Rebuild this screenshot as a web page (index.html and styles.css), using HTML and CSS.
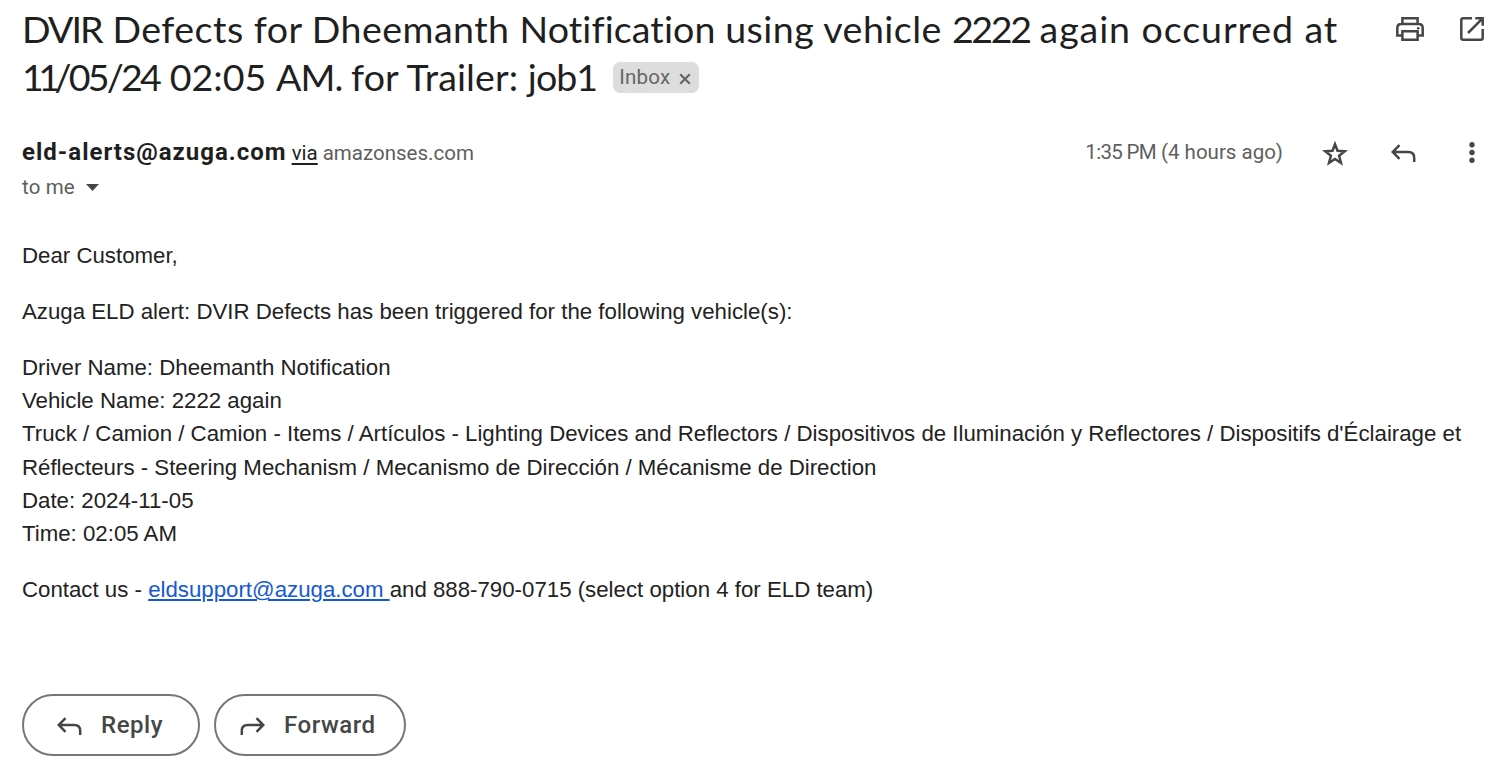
FILE: index.html
```html
<!DOCTYPE html>
<html lang="en">
<head>
<meta charset="utf-8">
<title>DVIR Defects</title>
<link rel="stylesheet" href="styles.css">
</head>
<body>
<main class="message">
  <header class="subject-bar">
    <h1 class="subject"><span class="caps">DVIR </span><span class="regular">Defects for Dheemanth </span><span class="snug">Notification </span><span class="regular">using vehicle </span><span class="digits">2222 </span><span class="loose">again occurred at</span><br><span class="ones">11</span><span class="digits date">/05/24 </span><span>02:05 </span><span class="initials">AM. </span><span class="snug">for Trailer: </span><span class="initials">job1</span><span class="label"><span class="label-name">Inbox</span><svg class="label-close" viewBox="0 0 12 12"><path d="M1.2 1.2l9.6 9.6M10.8 1.2l-9.6 9.6"/></svg></span></h1>
    <div class="subject-actions">
      <svg class="icon print" viewBox="0 0 28 24"><path d="M6.4 7V1.2h15.2V7M6.2 18.500H1.300V11q0-4 4-4h17.400q4 0 4 4v7.500h-4.900M6.400 14.200h15.200v8.600H6.400z"/><circle class="dot" cx="22.200" cy="11.300" r="1.300"/></svg>
      <svg class="icon open" viewBox="0 0 24 24"><path d="M12 1.300H3.300q-2 0-2 2v17.400q0 2 2 2h17.400q2 0 2-2V12M15.300 1.300h7.400v7.400M22.300 1.700L8 16"/></svg>
    </div>
  </header>
  <section class="sender-bar">
    <div class="sender">
      <div class="from"><span class="address">eld-alerts@azuga.com</span><span class="via">via</span><span class="domain">amazonses.com</span></div>
      <div class="to"><span>to me</span><svg class="caret" viewBox="0 0 13 7"><path d="M0 0h13L6.500 7z"/></svg></div>
    </div>
    <div class="meta">
      <span class="time"><span class="clock">1:35 PM</span> (4 hours ago)</span>
      <svg class="icon star" viewBox="0 0 26 25"><path d="M13 3.200l2.500 6.600 7.200.5-5.600 4.400 1.900 7.300-6-4-6 4 1.900-7.300L3.300 10.300l7.200-.5z"/></svg>
      <svg class="icon arrow" viewBox="0 0 25 18"><path d="M8.500 1.200L1.700 8l6.800 6.800M1.700 8h15.600q5.900 0 5.900 5.900v4"/></svg>
      <svg class="more" viewBox="0 0 6 21"><circle cx="3" cy="2.700" r="2.700"/><circle cx="3" cy="10.500" r="2.700"/><circle cx="3" cy="18.300" r="2.700"/></svg>
    </div>
  </section>
  <article class="content">
    <p>Dear Customer,</p>
    <p>Azuga ELD alert: DVIR Defects has been triggered for the following vehicle(s):</p>
    <p>Driver Name: Dheemanth Notification<br>Vehicle Name: 2222 again<br>Truck / Camion / Camion - Items / Artículos - Lighting Devices and Reflectors / Dispositivos de Iluminación y Reflectores / Dispositifs d'Éclairage et<br>Réflecteurs - Steering Mechanism / Mecanismo de Dirección / Mécanisme de Direction<br>Date: 2024-11-05<br>Time: 02:05 AM</p>
    <p>Contact us - <a href="mailto:eldsupport@azuga.com">eldsupport@azuga.com </a>and 888-790-0715 (select option 4 for ELD team)</p>
  </article>
  <footer class="actions">
    <button class="button reply"><svg class="icon arrow" viewBox="0 0 25 18"><path d="M8.500 1.200L1.700 8l6.800 6.800M1.700 8h15.600q5.900 0 5.900 5.900v4"/></svg><span>Reply</span></button>
    <button class="button forward"><svg class="icon arrow flip" viewBox="0 0 25 18"><path d="M8.500 1.200L1.700 8l6.800 6.800M1.700 8h15.600q5.900 0 5.900 5.900v4"/></svg><span>Forward</span></button>
  </footer>
</main>
</body>
</html>
```
FILE: styles.css
```css
* { box-sizing: border-box; }
body { margin: 0; background: #fff; color: #1f1f1f; font-family: Roboto, sans-serif; overflow: hidden; }
svg { display: block; flex: none; }
.message { padding: 5px 22px 0; width: 1512px; height: 776px; }
.icon { fill: none; stroke: #444746; stroke-width: 2.5; }
.icon .dot { fill: #444746; stroke: none; }

.subject-bar { display: flex; justify-content: space-between; height: 130px; }
.subject { margin: 0; font: 400 37.600px/48px Lato, sans-serif; white-space: nowrap; }
.caps { letter-spacing: -1.900px; word-spacing: 3px; }
.regular { letter-spacing: 0.450px; }
.snug { letter-spacing: 0.080px; }
.digits { letter-spacing: -2.300px; word-spacing: 2.400px; }
.date { letter-spacing: -2.800px; word-spacing: 4px; }
.loose { letter-spacing: 0.900px; }
.ones { letter-spacing: -5.500px; }
.initials { letter-spacing: -0.950px; }
.label { display: inline-flex; align-items: center; vertical-align: 7px; height: 31px; width: 86px; margin-left: 16px; padding-left: 6px; gap: 9px; background: #ddd; border-radius: 7px; color: #666; font: 400 20.500px/30px Roboto, sans-serif; }
.label-name { letter-spacing: 0.200px; }
.label-close { width: 12px; height: 12px; margin-top: 3px; fill: none; stroke: #666; stroke-width: 2.200; }
.subject-actions { display: flex; gap: 36px; padding: 12px 6px 0 0; }
.print { width: 28px; height: 24px; }
.open { width: 24px; height: 24px; }

.sender-bar { display: flex; justify-content: space-between; height: 104px; }
.from { display: flex; align-items: baseline; height: 34px; line-height: 34px; font-size: 20.500px; }
.address { font-size: 24px; font-weight: 700; letter-spacing: 1px; }
.via { margin-left: 5px; text-decoration: underline; text-underline-offset: 3px; }
.domain { margin-left: 5px; color: #5e5e5e; }
.to { display: flex; align-items: center; gap: 11px; height: 35px; padding-top: 1px; color: #5e5e5e; font-size: 20.500px; letter-spacing: 0.150px; }
.caret { width: 13px; height: 7px; fill: #444746; }
.meta { display: flex; align-items: center; height: 34px; padding-right: 15px; }
.time { color: #5e5e5e; font-size: 20.500px; }
.clock { letter-spacing: -0.700px; }
.star { width: 26px; height: 25px; margin: 2px 0 0 39px; }
.meta .arrow { margin: 2px 1px 0 43px; }
.arrow { width: 25px; height: 18px; }
.more { width: 6px; height: 21px; margin-left: 52px; fill: #444746; }

.content { height: 455px; font: 400 22.250px/33.370px "Liberation Sans", Arial, sans-serif; color: #222; white-space: nowrap; padding-top: 0.300px; }
.content p { margin: 0 0 22.250px; }
.content a { color: #1558d6; }

.actions { display: flex; gap: 14px; }
.button { display: flex; align-items: center; height: 62px; padding: 0 0 0 33px; border: 2px solid #747775; border-radius: 31px; background: #fff; color: #444746; font: 500 24px/30px Roboto, sans-serif; gap: 19px; letter-spacing: 0.550px; }
.button .arrow { margin-top: 1px; }
.reply { width: 178px; }
.forward { width: 192px; padding-left: 24px; }
.flip { transform: scaleX(-1); }
```
